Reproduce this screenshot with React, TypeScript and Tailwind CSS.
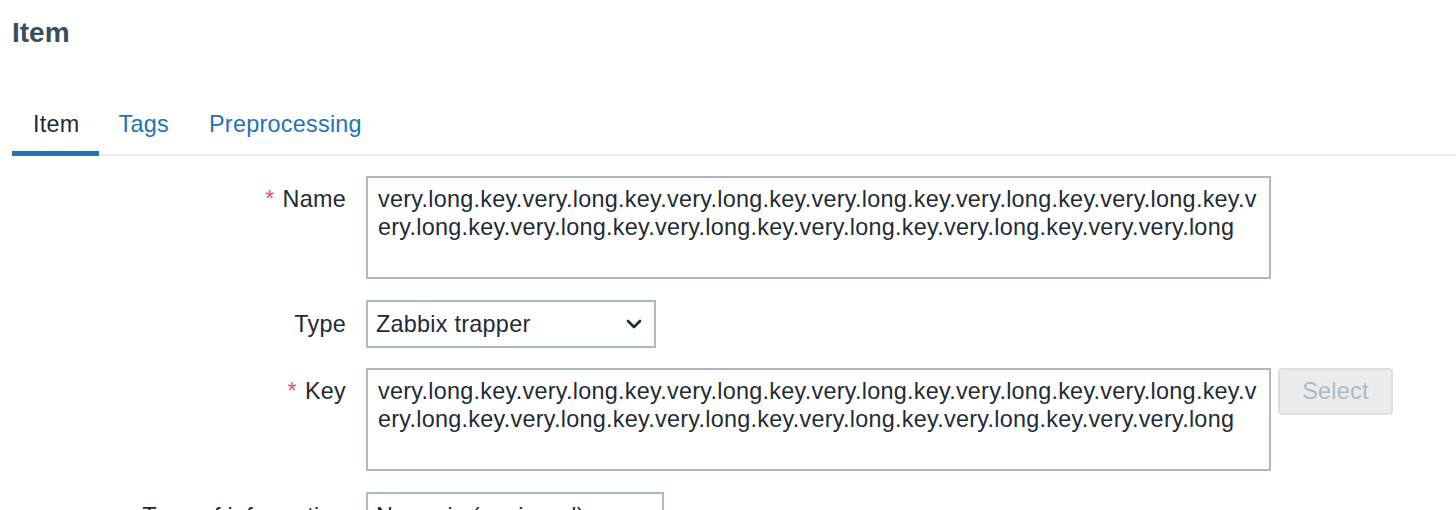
import React from 'react';

const longKey1 = 'very.long.key.very.long.key.very.long.key.very.long.key.very.long.key.very.long.key.v';
const longKey2 = 'ery.long.key.very.long.key.very.long.key.very.long.key.very.long.key.very.very.long';

const Label = ({ text, required }: { text: string; required?: boolean }) => (
  <div className="w-[354px] shrink-0 pr-[20px] text-right leading-[28px] whitespace-nowrap">
    {required && <span className="mr-[8px] text-[#e45959]">*</span>}
    {text}
  </div>
);

const Chevron = () => (
  <svg width="16" height="10" viewBox="0 0 16 10" className="shrink-0">
    <path d="M2 2 L8 8 L14 2" fill="none" stroke="#1f2c33" strokeWidth="2.6" strokeLinecap="round" strokeLinejoin="round" />
  </svg>
);

const LongArea = () => (
  <div className="h-[103px] w-[905px] border-2 border-[#acbbc2] bg-white px-[10px] pt-[7px] leading-[28px] whitespace-nowrap overflow-hidden">
    <div>{longKey1}</div>
    <div>{longKey2}</div>
  </div>
);

const SelectBox = ({ value, width }: { value: string; width: string }) => (
  <div className={`flex h-[48px] items-center justify-between border-2 border-[#acbbc2] bg-white pl-[8px] pr-[12px] leading-[28px] ${width}`}>
    <span>{value}</span>
    <Chevron />
  </div>
);

export default function App() {
  const tabs = ['Item', 'Tags', 'Preprocessing'];

  return (
    <div
      className="min-h-screen bg-white pl-[12px] text-[23.4px] tracking-[0.26px] text-[#1f2c33]"
      style={{ fontFamily: '"Liberation Sans", Arial, Helvetica, sans-serif' }}
    >
      <h1 className="pt-[19px] text-[28px] font-bold leading-[28px] tracking-normal text-[#3a4d5b]">Item</h1>

      <ul className="mt-[63px] flex border-b-2 border-[#ebeef0]">
        {tabs.map((t, i) =>
          i === 0 ? (
            <li key={t} className="-mb-[2px] border-b-[5px] border-[#1f73b7] pl-[21px] pr-[19px] pb-[13px] leading-[28px]">
              {t}
            </li>
          ) : (
            <li key={t} className="px-[20px] leading-[28px] text-[#1f73b7]">
              {t}
            </li>
          )
        )}
      </ul>

      <div className="pt-[20px]">
        <div className="mb-[21px] flex">
          <div className="pt-[9px]">
            <Label text="Name" required />
          </div>
          <LongArea />
        </div>

        <div className="mb-[20px] flex">
          <div className="pt-[10px]">
            <Label text="Type" />
          </div>
          <SelectBox value="Zabbix trapper" width="w-[290px]" />
        </div>

        <div className="mb-[21px] flex">
          <div className="pt-[9px]">
            <Label text="Key" required />
          </div>
          <LongArea />
          <button
            disabled
            className="ml-[7px] flex h-[47px] w-[115px] items-center justify-center rounded-[4px] border-2 border-[#dadfe2] bg-[#ebebeb] text-[#acbbc2]"
          >
            Select
          </button>
        </div>

        <div className="flex">
          <div className="pt-[10px]">
            <Label text="Type of information" />
          </div>
          <SelectBox value="Numeric (unsigned)" width="w-[298px]" />
        </div>
      </div>
    </div>
  );
}
